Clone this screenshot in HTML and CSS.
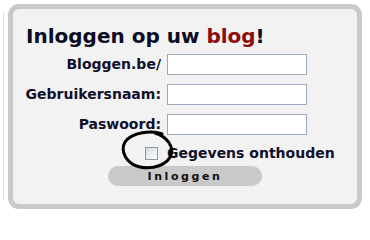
FILE: index.html
```html
<!DOCTYPE html>
<html lang="nl">
<head>
<meta charset="utf-8">
<title>Inloggen</title>
<link rel="stylesheet" href="styles.css">
</head>
<body>
<div class="page">
  <div class="edge"></div>
  <div class="box">
    <h1 class="title">Inloggen op uw <span class="red">blog</span>!</h1>
    <form class="form">
      <label class="lbl" for="b">Bloggen.be/</label>
      <input class="inp" id="b" type="text">
      <label class="lbl" for="u">Gebruikersnaam:</label>
      <input class="inp" id="u" type="text">
      <label class="lbl" for="p">Paswoord:</label>
      <input class="inp" id="p" type="password">
      <div class="chkcell">
        <span class="chk"></span>
        <svg class="ring" width="56" height="44" viewBox="0 0 56 44">
          <path d="M42 5 C32 1 12 3 5 13 C0 22 6 35 20 38 C34 41 48 35 51 26 C54 17 47 8 35 4" fill="none" stroke="#000" stroke-width="3" stroke-linecap="round"/>
        </svg>
      </div>
      <span class="remember">Gegevens onthouden</span>
      <div class="btnrow"><button class="btn" type="button">Inloggen</button></div>
    </form>
  </div>
</div>
</body>
</html>
```
FILE: styles.css
```css
html, body {
  margin: 0;
  padding: 0;
  background: #ffffff;
}
body {
  width: 370px;
  height: 213px;
  overflow: hidden;
  font-family: Verdana, "DejaVu Sans", sans-serif;
  font-weight: bold;
  color: #10102a;
}
.page {
  display: flex;
  align-items: flex-start;
  padding-top: 4px;
}
.edge {
  width: 1px;
  height: 188px;
  margin: 8px 4px 0 3px;
  background: #dcdcdc;
}
.box {
  width: 344px;
  height: 195px;
  border: 5px solid #c9c9c9;
  border-radius: 11px;
  background: #f2f2f2;
  display: flex;
  flex-direction: column;
}
.title {
  margin: 15px 0 0 13px;
  font-size: 20px;
  line-height: 24px;
  font-weight: bold;
  color: #0c0c24;
}
.red { color: #8c0d10; }
.form {
  margin: 6px 0 0 0;
  display: grid;
  grid-template-columns: 148px 140px;
  column-gap: 6px;
  row-gap: 9px;
  align-items: center;
}
.lbl {
  text-align: right;
  font-size: 14px;
  line-height: 21px;
  white-space: nowrap;
}
.inp {
  box-sizing: border-box;
  width: 140px;
  height: 21px;
  margin: 0;
  border: 1px solid #9aa9bb;
  background: #ffffff;
  padding: 0 3px;
}
.chkcell {
  position: relative;
  height: 18px;
  display: flex;
  align-items: center;
  justify-content: flex-end;
  padding-right: 3px;
}
.chk {
  width: 11px;
  height: 11px;
  border: 1px solid #8a97a6;
  background: linear-gradient(135deg, #d5dae1, #ffffff);
}
.ring {
  position: absolute;
  left: 107px;
  top: -15px;
}
.remember {
  font-size: 14px;
  line-height: 18px;
  white-space: nowrap;
}
.btnrow {
  grid-column: 1 / 3;
  display: flex;
  padding-left: 95px;
  margin-top: -5px;
}
.btn {
  width: 154px;
  height: 20px;
  border: none;
  border-radius: 10px;
  background: #c9c9c9;
  font-family: Verdana, "DejaVu Sans", sans-serif;
  font-weight: bold;
  font-size: 11px;
  letter-spacing: 2.6px;
  color: #111111;
  padding: 0;
  margin: 0;
}
```
